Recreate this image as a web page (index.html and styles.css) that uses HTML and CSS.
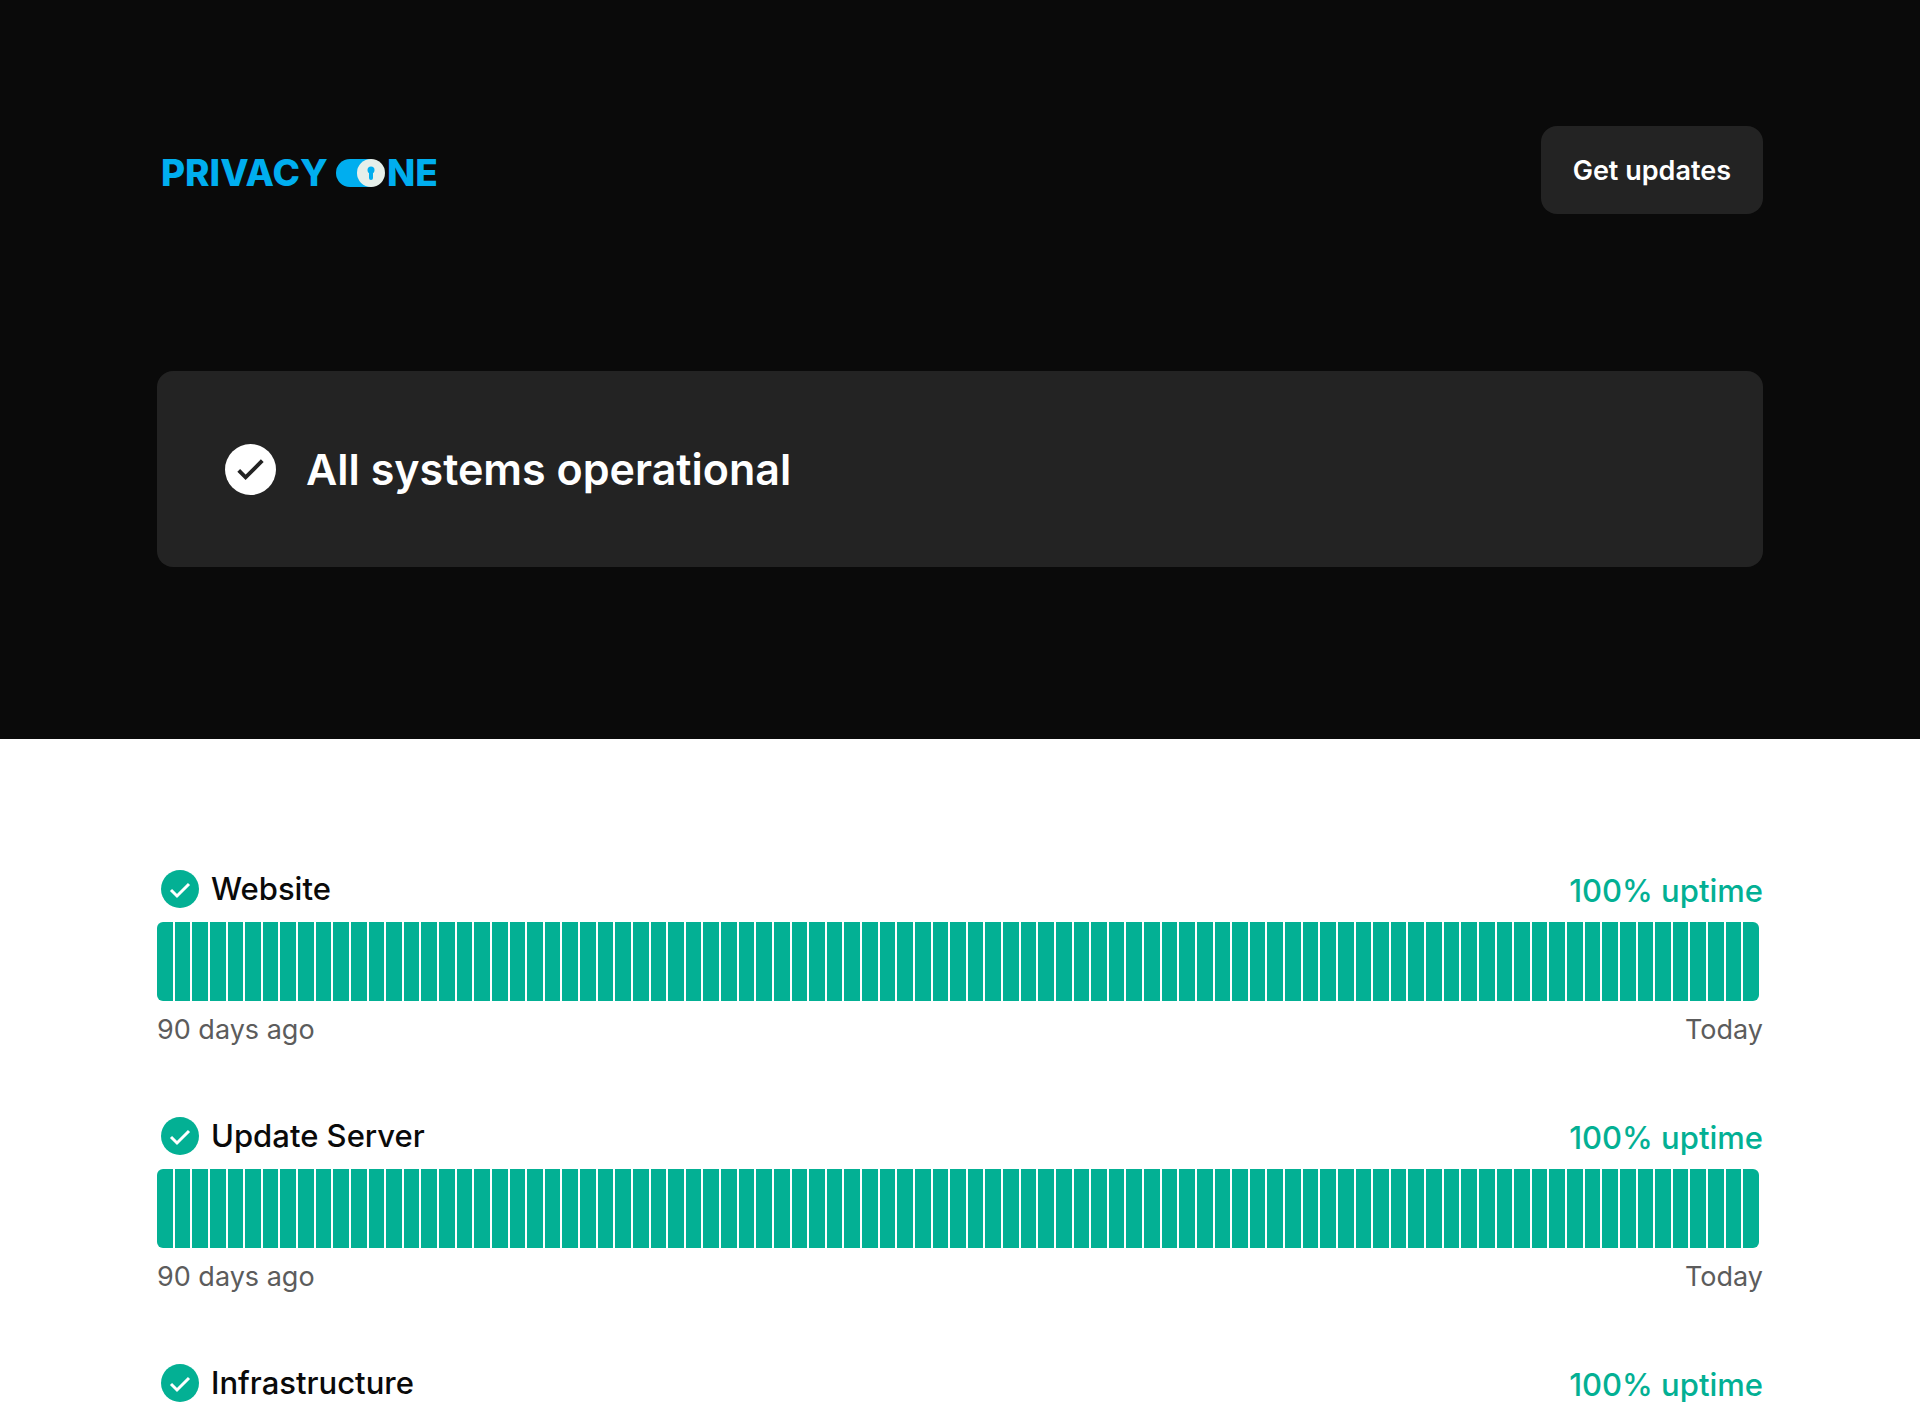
FILE: index.html
```html
<!DOCTYPE html>
<html lang="en">
<head>
  <meta charset="UTF-8" /><meta name="viewport" content="width=device-width,initial-scale=1"/>
  <title>Privacy One Status</title>
  <link rel="stylesheet" href="styles.css">
</head>
<body>

  <header class="hero">
    <div class="wrap">
      <div class="topbar">
        <a href="#" class="logo" aria-label="Privacy One">
          <svg width="290" height="54" viewBox="0 -10 290 54">
            <text class="logo-text" x="0" y="31">PRIVACY</text>
            <rect x="175" y="4" width="46" height="28" rx="14" fill="#00aeef"/>
            <circle cx="210" cy="18" r="14" fill="#e6efea"/>
            <circle cx="210" cy="15" r="3.5" fill="#00aeef"/>
            <path d="M208 15h4v8a2 2 0 0 1-4 0z" fill="#00aeef"/>
            <text class="logo-text" x="226" y="31">NE</text>
          </svg>
        </a>
        <button class="subscribe" type="button">Get updates</button>
      </div>

      <div class="status">
        <svg class="status-icon" viewBox="0 0 52 52">
          <circle cx="26" cy="26" r="26" fill="#fff"/>
          <path d="M14 27l7 7 17-17" fill="none" stroke="#232323" stroke-width="4"/>
        </svg>
        <h1>All systems operational</h1>
      </div>
    </div>
  </header>

  <main class="wrap services">
    <section class="service">
      <div class="service-head">
        <svg class="check" viewBox="0 0 38 38"><circle cx="19" cy="19" r="19" fill="#03b094"/><path d="M10 20l6 6 12-12" fill="none" stroke="#fff" stroke-width="3"/></svg>
        <h2>Website</h2>
        <span class="uptime">100% uptime</span>
      </div>
      <div class="bars"></div>
      <div class="legend"><span>90 days ago</span><span>Today</span></div>
    </section>

    <section class="service">
      <div class="service-head">
        <svg class="check" viewBox="0 0 38 38"><circle cx="19" cy="19" r="19" fill="#03b094"/><path d="M10 20l6 6 12-12" fill="none" stroke="#fff" stroke-width="3"/></svg>
        <h2>Update Server</h2>
        <span class="uptime">100% uptime</span>
      </div>
      <div class="bars"></div>
      <div class="legend"><span>90 days ago</span><span>Today</span></div>
    </section>

    <section class="service">
      <div class="service-head">
        <svg class="check" viewBox="0 0 38 38"><circle cx="19" cy="19" r="19" fill="#03b094"/><path d="M10 20l6 6 12-12" fill="none" stroke="#fff" stroke-width="3"/></svg>
        <h2>Infrastructure</h2>
        <span class="uptime">100% uptime</span>
      </div>
    </section>
  </main>

  <script>
    // one bar per day, today included
    document.querySelectorAll('.bars').forEach(el=>{
      for(let i=0;i<91;i++) el.appendChild(document.createElement('i'));
    });
  </script>
</body>
</html>
```

FILE: styles.css
```css
* { box-sizing: border-box; }
body { margin: 0; background: #fff; color: #0a0a0a; font-family: Inter, "Liberation Sans", sans-serif; }
h1, h2 { margin: 0; }
.wrap { max-width: 1920px; margin: 0 auto; padding: 0 157px; }

.hero { background: #0a0a0a; color: #fff; padding: 126px 0 172px; }
.topbar { display: flex; justify-content: space-between; align-items: center; margin-bottom: 157px; }
.logo { display: block; padding: 4px 0 0 4px; }
.logo svg { display: block; }
.logo-text { font-family: Inter, sans-serif; font-size: 37px; font-weight: 800; fill: #00aeef; }
.subscribe { height: 88px; padding: 0 32px; border: none; border-radius: 16px; background: #232323; color: #fff; font-family: inherit; font-size: 27px; font-weight: 600; cursor: pointer; }

.status { display: flex; align-items: center; gap: 30px; min-height: 196px; padding: 0 68px; border-radius: 16px; background: #232323; }
.status-icon { width: 51px; height: 51px; flex: none; }
.status h1 { font-size: 43px; font-weight: 600; }

.services { padding-top: 130px; }
.service { margin-bottom: 68px; }
.service-head { display: flex; align-items: center; gap: 12px; height: 40px; margin-bottom: 13px; padding-left: 4px; }
.check { width: 38px; height: 38px; flex: none; }
.service-head h2, .uptime { font-size: 31px; line-height: 40px; font-weight: 500; }
.uptime { margin-left: auto; padding-top: 4px; color: #03b094; }
.bars { display: flex; gap: 2px; height: 79px; padding-right: 4px; }
.bars i { flex: 1; background: #03b094; }
.bars i:first-child { border-radius: 6px 0 0 6px; }
.bars i:last-child { border-radius: 0 6px 6px 0; }
.legend { display: flex; justify-content: space-between; margin-top: 11px; font-size: 27px; line-height: 36px; color: #5c5c5c; }
```
